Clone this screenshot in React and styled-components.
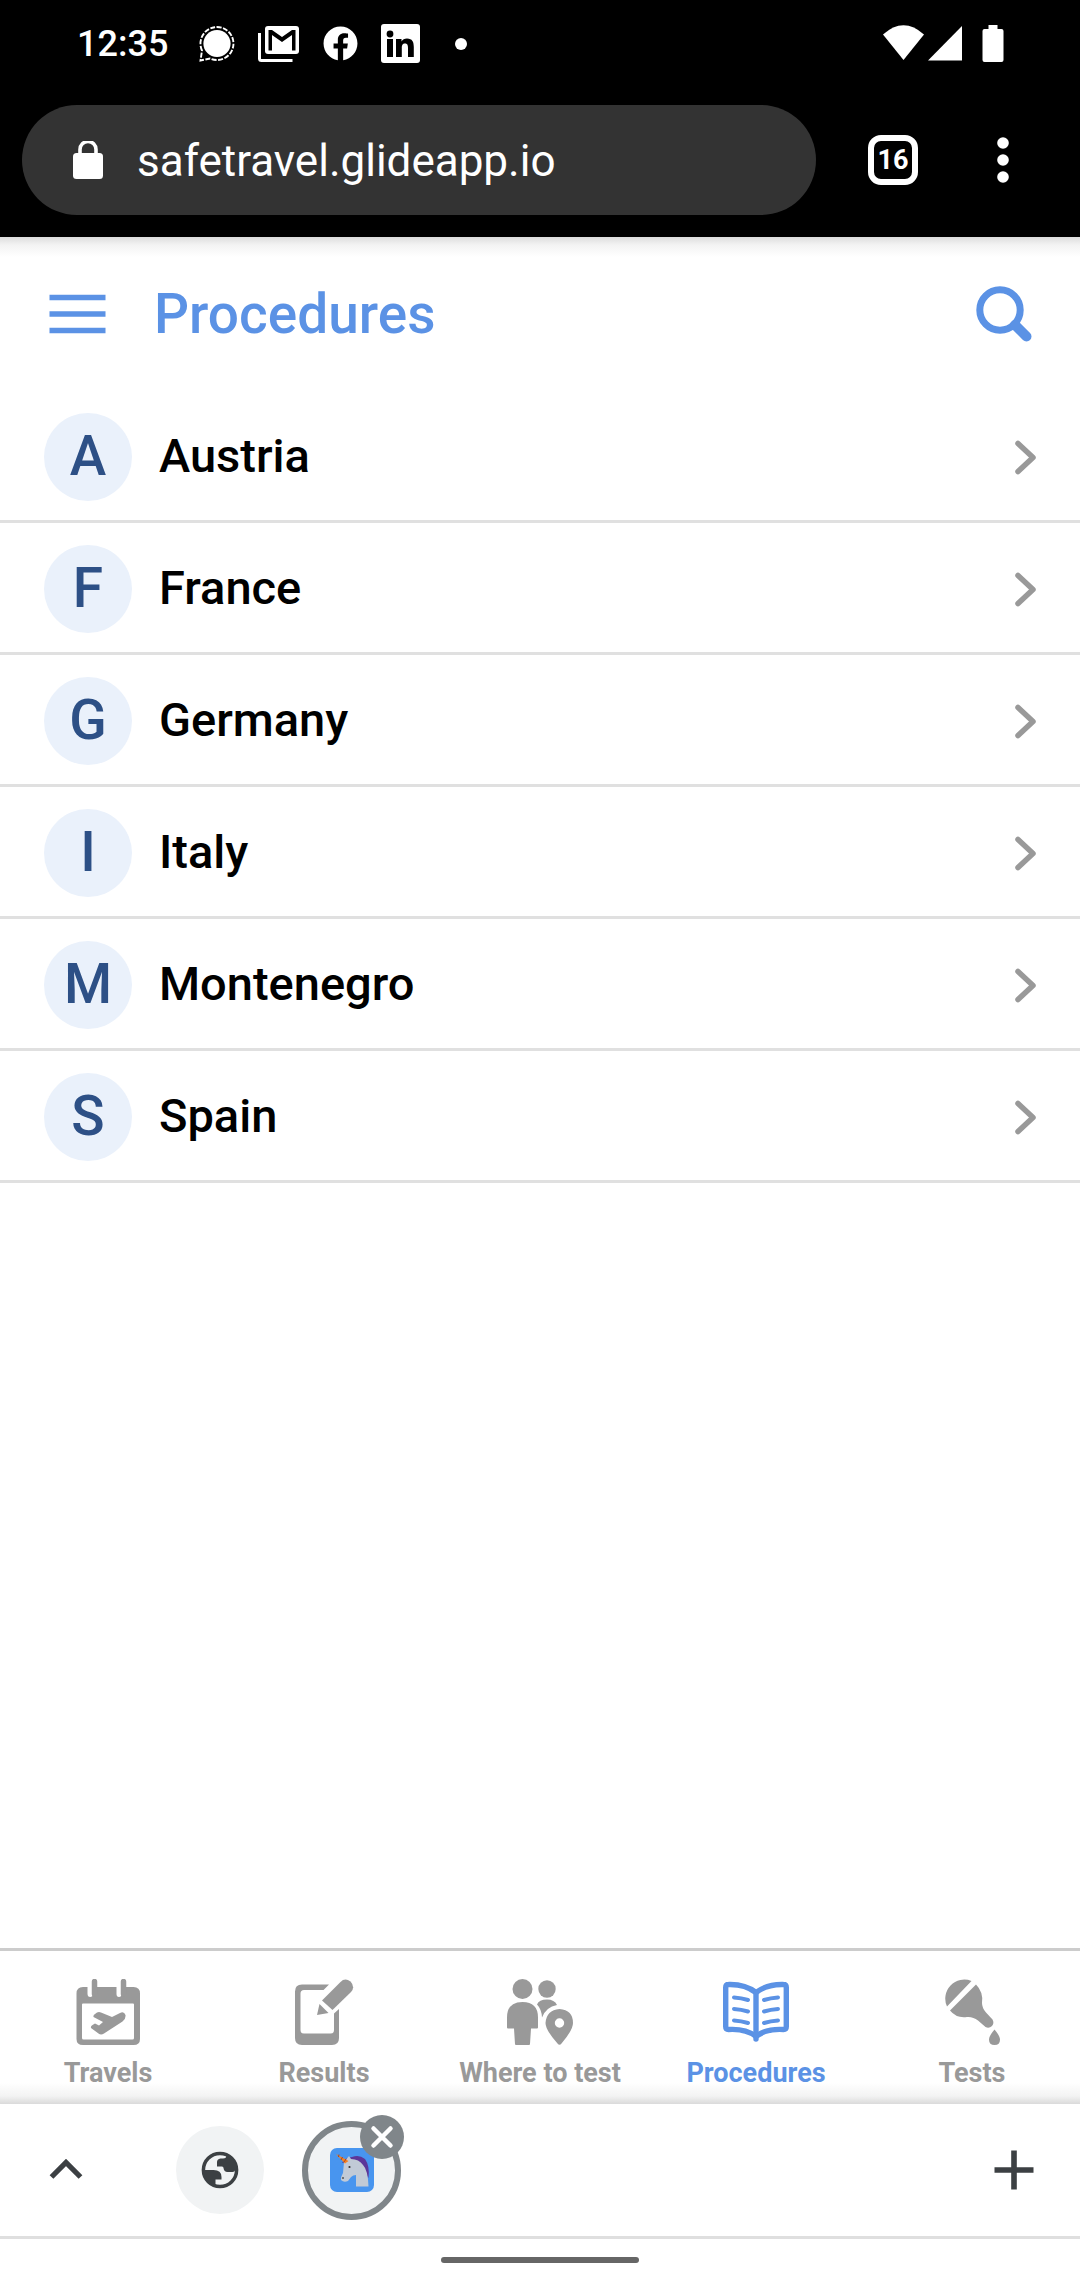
import React from "react";
import styled, { createGlobalStyle } from "styled-components";
import { FaFacebook } from "react-icons/fa";

const BLUE = "#5b92e5";
const GREY = "#999999";
const DARK = "#3c4043";

const GlobalStyle = createGlobalStyle`
    * {
        box-sizing: border-box;
    }
    body {
        margin: 0;
        background: #fff;
        font-family: Roboto, "Liberation Sans", sans-serif;
    }
    button {
        border: 0;
        padding: 0;
        background: none;
        font: inherit;
        color: inherit;
    }
    svg {
        display: block;
        flex: none;
    }
`;

const Page = styled.div`
    display: flex;
    flex-direction: column;
    min-height: 100vh;
`;

const StatusBar = styled.div`
    display: flex;
    align-items: center;
    justify-content: space-between;
    height: 87px;
    padding: 0 76px 0 77px;
    background: #000;
    color: #fff;
`;

const StatusGroup = styled.div`
    display: flex;
    align-items: center;
    gap: 23px;
`;

const Clock = styled.time`
    margin-right: 8px;
    font-size: 36px;
    line-height: 44px;
    font-weight: 500;
`;

const Toolbar = styled.div`
    display: flex;
    align-items: center;
    height: 150px;
    padding: 0 71px 4px 22px;
    background: #000;
    color: #fff;
`;

const AddressBar = styled.label`
    display: flex;
    flex: 1;
    align-items: center;
    gap: 33px;
    height: 110px;
    padding: 2px 50px 0;
    border-radius: 55px;
    background: #333333;
`;

const AddressInput = styled.input`
    flex: 1;
    min-width: 0;
    padding: 0;
    border: 0;
    outline: 0;
    background: transparent;
    color: #fff;
    font-family: inherit;
    font-size: 44px;
    line-height: 52px;
`;

const TabCount = styled.button`
    width: 50px;
    height: 50px;
    margin: 0 79px 0 52px;
    border: 6px solid #fff;
    border-radius: 13px;
    font-size: 27px;
    line-height: 36px;
    font-weight: 700;
`;

const Header = styled.header`
    display: flex;
    align-items: center;
    height: 154px;
    padding: 0 46px;
    color: ${BLUE};
    background: linear-gradient(#dddddd, #f3f3f3 8px, #fff 20px);
`;

const Title = styled.h1`
    flex: 1;
    margin: 0 0 0 46px;
    font-size: 55px;
    line-height: 64px;
    font-weight: 500;
`;

const List = styled.ul`
    flex: 1;
    margin: 0;
    padding: 0;
    list-style: none;
`;

const Row = styled.a`
    display: flex;
    align-items: center;
    height: 132px;
    padding: 0 40px 0 44px;
    box-shadow: inset 0 -3px #e0e0e0;
    color: #000;
    text-decoration: none;
`;

const Avatar = styled.span`
    width: 88px;
    height: 88px;
    margin-right: 27px;
    border-radius: 50%;
    background: #eaf1fb;
    color: #2d5086;
    font-size: 55px;
    line-height: 86px;
    font-weight: 500;
    text-align: center;
`;

const RowName = styled.span`
    flex: 1;
    padding-bottom: 2px;
    font-size: 47px;
    line-height: 54px;
    font-weight: 500;
`;

const TabBar = styled.nav`
    display: grid;
    grid-template-columns: repeat(5, 1fr);
    height: 156px;
    border-top: 3px solid #cccccc;
    background: linear-gradient(transparent 132px, #f3f3f3 145px, #dadada);
`;

const TabLink = styled.a`
    display: flex;
    flex-direction: column;
    align-items: center;
    gap: 10px;
    padding-top: 28px;
    color: ${(props) => (props.$active ? BLUE : GREY)};
    font-size: 27px;
    line-height: 36px;
    font-weight: 700;
    text-decoration: none;
    white-space: nowrap;
`;

const GroupBar = styled.div`
    display: flex;
    align-items: center;
    height: 135px;
    padding: 0 44px;
    border-bottom: 3px solid #dfdfdf;
    color: ${DARK};
`;

const SiteButton = styled.button`
    display: grid;
    place-items: center;
    width: ${(props) => (props.$selected ? 99 : 88)}px;
    height: ${(props) => (props.$selected ? 99 : 88)}px;
    margin-left: ${(props) => (props.$selected ? 38 : 88)}px;
    border: ${(props) => (props.$selected ? "6px solid #80868a" : "0")};
    border-radius: 50%;
    background: #f1f3f4;
`;

const SiteSlot = styled.div`
    position: relative;
    flex: 1;
`;

const CloseBadge = styled.button`
    position: absolute;
    top: -6px;
    left: 96px;
    display: grid;
    place-items: center;
    width: 44px;
    height: 44px;
    border-radius: 50%;
    background: #80868a;
`;

const GestureBar = styled.div`
    display: grid;
    place-items: center;
    height: 41px;

    &::after {
        content: "";
        width: 198px;
        height: 6px;
        border-radius: 3px;
        background: #666666;
    }
`;

const SignalIcon = () => (
    <svg width="36" height="36" viewBox="0 0 36 36">
        <circle cx="18" cy="17.5" r="13.600" fill="#fff" />
        <path
            d="M3 24.500A16.500 16.500 0 1 1 11 32.500L1.500 34.500Z"
            fill="none"
            stroke="#fff"
            strokeWidth="1.900"
            strokeDasharray="5 1.500"
        />
    </svg>
);

const GmailIcon = () => (
    <svg width="42" height="36" viewBox="0 0 42 36">
        <path d="M1.5 7V32.5Q1.5 34.5 3.500 34.500H34.500" fill="none" stroke="#fff" strokeWidth="3" />
        <rect x="7" y="0" width="34" height="28" rx="3" fill="#fff" />
        <path d="M10.500 4H14L24 11L34 4H37.500V24.500H34V9L24 16L14 9V24.500H10.500Z" />
    </svg>
);

const LinkedInIcon = () => (
    <svg width="39" height="39" viewBox="0 0 39 39">
        <rect width="39" height="39" rx="3" fill="#fff" />
        <circle cx="9" cy="10" r="3.400" />
        <path d="M6 15h6v18H6zM15 15h5.500v2.500c1-1.800 3-3 5.500-3 5.400 0 6.800 3.500 6.800 8.500V33H27v-9c0-2.300-.3-4.600-2.900-4.600-2.700 0-3.300 2-3.300 4.500V33H15z" />
    </svg>
);

const MoreDotIcon = () => (
    <svg width="36" height="12" viewBox="0 0 36 12">
        <circle cx="18" cy="6" r="6" fill="#fff" />
    </svg>
);

const StatusIcons = () => (
    <svg width="122" height="37" viewBox="0 0 122 37" fill="#fff">
        <path d="M1 9.500Q21.500-9 42 9.500L21.500 35Z" />
        <path d="M80 1V35.500H46Z" />
        <path d="M106.500 0h9v4h4q2 0 2 2v29q0 2-2 2h-17q-2 0-2-2V6q0-2 2-2h4z" />
    </svg>
);

const LockIcon = () => (
    <svg width="32" height="40" viewBox="0 0 32 40">
        <rect x="1" y="12" width="30" height="26" rx="3.500" fill="#fff" />
        <path d="M8 13V8.500a8 8 0 0 1 16 0v4.500" fill="none" stroke="#fff" strokeWidth="3.600" />
    </svg>
);

const DotsIcon = () => (
    <svg width="12" height="46" viewBox="0 0 12 46" fill="#fff">
        <circle cx="6" cy="6" r="5.800" />
        <circle cx="6" cy="23" r="5.800" />
        <circle cx="6" cy="40" r="5.800" />
    </svg>
);

const MenuIcon = () => (
    <svg width="62" height="44" viewBox="0 0 62 44" stroke={BLUE} strokeWidth="5.500">
        <path d="M3.500 5.500h56M3.500 22h56M3.500 38.500h56" />
    </svg>
);

const SearchIcon = () => (
    <svg width="60" height="60" viewBox="0 0 60 60" fill="none" stroke={BLUE}>
        <circle cx="26" cy="26" r="20.200" strokeWidth="7" />
        <path d="M41 41L52.500 52.500" strokeWidth="10" strokeLinecap="round" />
    </svg>
);

const ChevronIcon = () => (
    <svg width="28" height="36" viewBox="0 0 28 36" fill="none" stroke={GREY} strokeWidth="5.500" strokeLinecap="round" strokeLinejoin="round">
        <path d="M6 4.500L21 18.500L6 32.500" />
    </svg>
);

const TravelsIcon = () => (
    <svg width="66" height="66" viewBox="0 0 66 66" fill="currentColor">
        <path
            fillRule="evenodd"
            d="M8 8H12.500V14.500Q12.500 18 15.200 18Q17.800 18 17.800 15V8H41.500V15Q41.500 18 44 18Q46.500 18 46.500 15V8H58.500Q65 8 65 14.500V60Q65 66 58.500 66H8Q1.500 66 1.500 60V14.500Q1.500 8 8 8ZM7 25.500V59Q7 60.500 8.500 60.500H57.500Q59 60.500 59 59V25.500Q59 24.500 58 24.500H8Q7 24.500 7 25.500Z"
        />
        <path d="M19.500 2.500V15M48.500 2.500V15" fill="none" stroke="currentColor" strokeWidth="5.500" strokeLinecap="round" />
        <path d="M22 33.500Q24 32.500 26 33.500L37 38L45 34Q49 32 50.500 36Q51 40 47.500 42.500L29 54.500Q26 56.500 23.500 54.500L16 49Q15.500 47 17.500 46L20 44.500L24 46.500L28 43L18.500 38Q18 36 20 35Z" />
    </svg>
);

const ResultsIcon = () => (
    <svg width="66" height="66" viewBox="0 0 66 66" fill="currentColor">
        <path d="M38 5.500H11Q4 5.500 4 12.500V59Q4 66 11 66H41Q48 66 48 59V30L43 34.500V51Q43 54.500 39.500 54.500H13Q9.500 54.500 9.500 51V14.500Q9.500 11 13 11H32.500Z" />
        <path d="M31 21.500L49.500 3Q54-1.500 59.500 2.500Q64.500 8 60 13L41.500 31Z" />
        <path d="M28.500 25L37.500 34L26 36Z" />
    </svg>
);

const PlacesIcon = () => (
    <svg width="66" height="66" viewBox="0 0 66 66" fill="currentColor">
        <circle cx="15.500" cy="10" r="10" />
        <circle cx="40" cy="10" r="8.700" />
        <path d="M0 38.500Q0 23 15.500 23Q31 23 31 38.500V48.500Q31 49.500 30 49.500H24L23 65Q23 66 22 66H9Q8 66 8 65L7 49.500H1Q0 49.500 0 48.500Z" />
        <path d="M30 25.500Q32 20.500 40 20.500Q47.500 20.500 50 26Q39 28 35 38.500Q34.500 30 30 25.500Z" />
        <path
            fillRule="evenodd"
            d="M52.500 30Q66 31 66 44Q66 51 54.500 64.500Q52.500 67 50.500 64.500Q38.500 51 38.500 44Q39.500 31 52.500 30ZM52.500 39.300A4.700 4.700 0 1 0 52.500 48.700A4.700 4.700 0 1 0 52.500 39.300Z"
        />
    </svg>
);

const ProceduresIcon = () => (
    <svg width="66" height="66" viewBox="0 0 66 66" fill="none" stroke="currentColor" strokeLinecap="round" strokeLinejoin="round">
        <path d="M33 13.500Q22 5 5.500 5.500Q2.700 5.500 2.700 8.500V47.500Q2.700 50.500 5.500 50.500Q23 49.500 33 57.500Q43 49.500 60.500 50.500Q63.300 50.500 63.300 47.500V8.500Q63.300 5.500 60.500 5.500Q44 5 33 13.500Z" strokeWidth="5.400" />
        <path d="M33 14V60" strokeWidth="5.400" />
        <path d="M11 18.500Q18.500 19 25 21M11 30Q18.500 30.500 25 32.500M11 41.500Q18.500 42 25 44M55 18.500Q47.500 19 41 21M55 30Q47.500 30.500 41 32.500M55 41.500Q47.500 42 41 44" strokeWidth="4" />
    </svg>
);

const TestsIcon = () => (
    <svg width="66" height="66" viewBox="0 0 66 66" fill="currentColor">
        <path d="M8 27.500A19 19 0 0 1 32.500 2Z" />
        <path d="M11 31.500L37 5.500Q44.500 13 43 24Q43 29 47 33.500L53.500 40.500Q55.500 44 53 47Q50 50 46.500 48L39 41.500Q34 37.500 28 38Q17.500 39.500 11 31.500Z" />
        <path d="M55.500 50.500Q61 57 61 60.500Q61 66 55.500 66Q50 66 50 60.500Q50 57 55.500 50.500Z" />
    </svg>
);

const UpIcon = () => (
    <svg width="44" height="44" viewBox="0 0 44 44" fill="none" stroke={DARK} strokeWidth="5.300">
        <path d="M7.500 29L22 14.500L36.500 29" />
    </svg>
);

const GlobeIcon = () => (
    <svg width="44" height="44" viewBox="0 0 44 44" fill={DARK}>
        <circle cx="22" cy="22" r="16.600" fill="none" stroke={DARK} strokeWidth="3.500" />
        <path d="M28.500 5.500V7Q28.500 10.500 25 10.500H22.500Q19 11 19 14V18.500H24Q25.500 18.500 25.500 20Q26 24 29.500 24H34.500Q37 24 37.500 21H39A17 17 0 0 0 28.500 5.500Z" />
        <path d="M5 22H15.500Q23.500 22 23.500 29V31.500H17.500V38.500A17 17 0 0 1 5 22Z" />
    </svg>
);

const UnicornIcon = () => (
    <svg width="44" height="44" viewBox="0 0 44 44">
        <rect width="44" height="44" rx="7" fill="#4895ef" />
        <path d="M12 15Q14 10 22 9Q29 6 35 11Q40 18 38.500 30L33 22L20 13Z" fill="#5c3699" />
        <path d="M14 14L19 8L21 11Q29 11 33 17Q38 22 38.500 38.500H26V27Q23 27 21 29L18 33Q14 35 11 32Q10.500 29 13 25Z" fill="#c1cad6" />
        <path d="M6 6L18.500 13L15 15.500Z" fill="#f48024" />
        <path d="M9 6.500L8.500 9M12.500 9L11 12M16 11L14 14" stroke="#a8481c" strokeWidth="1" />
        <circle cx="19.500" cy="19" r="1.100" fill="#333" />
        <circle cx="13" cy="30" r="1" fill="#555" />
    </svg>
);

const CloseIcon = () => (
    <svg width="24" height="24" viewBox="0 0 24 24" stroke="#fff" strokeWidth="4.500" strokeLinecap="round">
        <path d="M3.500 3.500L20.500 20.500M20.500 3.500L3.500 20.500" />
    </svg>
);

const PlusIcon = () => (
    <svg width="44" height="44" viewBox="0 0 44 44" stroke={DARK} strokeWidth="5.600">
        <path d="M22 2.500V41.500M2.500 22H41.500" />
    </svg>
);

const countries = ["Austria", "France", "Germany", "Italy", "Montenegro", "Spain"];

const tabs = [
    { name: "Travels", Icon: TravelsIcon },
    { name: "Results", Icon: ResultsIcon },
    { name: "Where to test", Icon: PlacesIcon },
    { name: "Procedures", Icon: ProceduresIcon, active: true },
    { name: "Tests", Icon: TestsIcon },
];

const App = () => {
    return (
        <Page>
            <GlobalStyle />
            <StatusBar>
                <StatusGroup>
                    <Clock>12:35</Clock>
                    <SignalIcon />
                    <GmailIcon />
                    <FaFacebook size={35} />
                    <LinkedInIcon />
                    <MoreDotIcon />
                </StatusGroup>
                <StatusIcons />
            </StatusBar>
            <Toolbar>
                <AddressBar>
                    <LockIcon />
                    <AddressInput type="text" aria-label="Address" defaultValue="safetravel.glideapp.io" />
                </AddressBar>
                <TabCount>16</TabCount>
                <button aria-label="More options"><DotsIcon /></button>
            </Toolbar>
            <Header>
                <button aria-label="Menu"><MenuIcon /></button>
                <Title>Procedures</Title>
                <button aria-label="Search"><SearchIcon /></button>
            </Header>
            <List>
                {countries.map((name) => (
                    <li key={name}>
                        <Row href={`#${name}`}>
                            <Avatar>{name[0]}</Avatar>
                            <RowName>{name}</RowName>
                            <ChevronIcon />
                        </Row>
                    </li>
                ))}
            </List>
            <TabBar>
                {tabs.map(({ name, Icon, active }) => (
                    <TabLink key={name} href={`#${name}`} $active={active}>
                        <Icon />
                        {name}
                    </TabLink>
                ))}
            </TabBar>
            <GroupBar>
                <button aria-label="Expand tabs"><UpIcon /></button>
                <SiteButton aria-label="Other site"><GlobeIcon /></SiteButton>
                <SiteSlot>
                    <SiteButton aria-label="Safe travel" $selected><UnicornIcon /></SiteButton>
                    <CloseBadge aria-label="Close tab"><CloseIcon /></CloseBadge>
                </SiteSlot>
                <button aria-label="New tab"><PlusIcon /></button>
            </GroupBar>
            <GestureBar />
        </Page>
    );
};

export default App;
